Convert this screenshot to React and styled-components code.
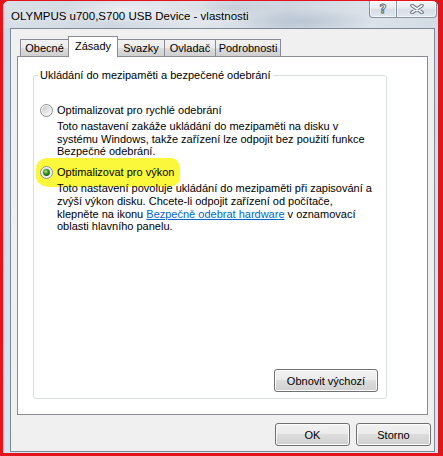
import React, { useId } from 'react';
import styled, { createGlobalStyle } from 'styled-components';

const Global = createGlobalStyle`
  html, body { margin: 0; padding: 0; }
  body {
    width: 443px; height: 456px; overflow: hidden;
    background: #e3141b;
    font-family: "Liberation Sans", Arial, sans-serif;
  }
`;

const Screen = styled.div`
  width: 443px;
  height: 456px;
  box-sizing: border-box;
  padding: 1px 5px 3px 3px;
  background: #e3141b;
  display: flex;
`;

const Window = styled.div`
  flex: 1;
  display: flex;
  flex-direction: column;
  border-radius: 6px 6px 0 0;
  overflow: hidden;
  background: linear-gradient(180deg, #d9e1ea 0px, #d3dce6 27px, #cddbea 28px, #d8e4f0 100%);
`;

const TitleBar = styled.div`
  height: 27px;
  flex: none;
  display: flex;
  align-items: flex-start;
  padding-left: 8px;
  background:
    radial-gradient(ellipse 60px 14px at 120px 8px, rgba(255,255,255,0.55), rgba(255,255,255,0)),
    radial-gradient(ellipse 70px 12px at 300px 20px, rgba(160,175,195,0.45), rgba(160,175,195,0)),
    radial-gradient(ellipse 50px 10px at 230px 6px, rgba(170,180,195,0.4), rgba(170,180,195,0)),
    linear-gradient(90deg, #d8dfe7 0%, #cfd8e1 25%, #e1e6ec 45%, #cdd6e0 65%, #dce2e9 85%, #d3dbe4 100%);
`;

const Title = styled.div`
  padding-top: 8px;
  font-size: 11.5px;
  line-height: 14px;
  color: #000;
  white-space: nowrap;
  text-shadow: 0 0 6px rgba(255,255,255,0.9);
`;

const Captions = styled.div`
  margin-left: auto;
  margin-right: 1px;
  display: flex;
`;

const CaptionButton = styled.div`
  width: ${p => p.$w}px;
  height: 17px;
  box-sizing: border-box;
  border: 1px solid rgba(70, 84, 104, 0.6);
  border-top: none;
  border-left-width: ${p => (p.$first ? 1 : 0)}px;
  border-radius: ${p => (p.$first ? '0 0 0 4px' : '0 0 4px 0')};
  background: linear-gradient(180deg, #f3f5f8 0%, #e7ebf0 45%, #d6dde6 55%, #e2e8ef 100%);
  box-shadow: inset 0 0 0 1px rgba(255,255,255,0.6);
  display: flex;
  align-items: center;
  justify-content: center;
`;

const HelpGlyph = styled.span`
  font-family: "DejaVu Sans", sans-serif;
  font-weight: bold;
  font-size: 12px;
  line-height: 12px;
  color: #f2f4f7;
  -webkit-text-stroke: 0.8px #56606c;
  margin-top: -1px;
`;

const Client = styled.div`
  flex: 1;
  margin: 0 3px 1px 7px;
  border: 1px solid #7d8896;
  background: #f0f0f0;
  padding: 7px 6px 5px 6px;
  display: flex;
  flex-direction: column;
  font-size: 11px;
  color: #000;
`;

const TabStrip = styled.div`
  display: flex;
  align-items: flex-end;
  height: 21px;
  margin: 0 0 -1px 3px;
  position: relative;
  z-index: 1;
`;

const Tab = styled.div`
  width: ${p => p.$w}px;
  height: ${p => (p.$active ? 21 : 18)}px;
  box-sizing: border-box;
  margin-left: ${p => (p.$first ? 0 : -1)}px;
  border: 1px solid #898c95;
  border-bottom: ${p => (p.$active ? 'none' : '1px solid #898c95')};
  background: ${p =>
    p.$active
      ? '#ffffff'
      : 'linear-gradient(180deg, #f2f2f2 0%, #ebebeb 50%, #dddddd 51%, #cfcfcf 100%)'};
  position: relative;
  z-index: ${p => (p.$active ? 2 : 1)};
  display: flex;
  align-items: center;
  justify-content: center;
  padding-bottom: ${p => (p.$active ? 2 : 0)}px;
  font-size: 11px;
  white-space: nowrap;
`;

const Panel = styled.div`
  flex: 1;
  background: #fff;
  border: 1px solid #898c95;
  padding: 12px 40px 15px 15px;
  display: flex;
  flex-direction: column;
`;

const Group = styled.fieldset`
  flex: 1;
  margin: 0;
  min-width: 0;
  border: 1px solid #d5dfe5;
  border-radius: 3px;
  padding: 22px 8px 6px 6px;
  display: flex;
  flex-direction: column;
`;

const GroupTitle = styled.legend`
  padding: 0 2px;
  margin-left: -2px;
  font-size: 11px;
  line-height: 13px;
  white-space: nowrap;
`;

const OptionRow = styled.div`
  display: flex;
  align-items: center;
  gap: 4px;
  height: 13px;
  line-height: 13px;
  margin-top: ${p => p.$top}px;
  align-self: flex-start;
  white-space: nowrap;
  ${p =>
    p.$marked &&
    `
    background: #fbf73a;
    padding: 8px 6px 8px 4px;
    margin-left: -4px;
    margin-right: -6px;
    margin-bottom: -8px;
    margin-top: ${p.$top - 8}px;
    border-radius: 11px 9px 12px 13px / 10px 11px 9px 10px;
  `}
`;

const Description = styled.div`
  margin: 3px 0 0 17px;
  line-height: 12.7px;
`;

const Line = styled.div`
  white-space: nowrap;
`;

const Link = styled.span`
  color: #0066cc;
  text-decoration: underline;
`;

const Button = styled.div`
  width: ${p => p.$w}px;
  height: 23px;
  box-sizing: border-box;
  border: 1px solid #707070;
  border-radius: 3px;
  background: linear-gradient(180deg, #f2f2f2 0%, #ebebeb 48%, #dddddd 50%, #cfcfcf 100%);
  box-shadow: inset 0 0 0 1px #fcfcfc;
  display: flex;
  align-items: center;
  justify-content: center;
  font-size: 11px;
  white-space: nowrap;
  flex: none;
`;

const ResetButton = styled(Button)`
  margin-top: auto;
  align-self: flex-end;
`;

const ButtonRow = styled.div`
  display: flex;
  justify-content: flex-end;
  gap: 6px;
  margin: 8px -3px 0 0;
`;

function Radio({ checked }) {
  const id = useId().replace(/:/g, '');
  return (
    <svg width="13" height="13" viewBox="0 0 13 13" style={{ flex: 'none' }}>
      <defs>
        <linearGradient id={`b${id}`} x1="0" y1="0" x2="1" y2="1">
          <stop offset="0" stopColor="#c9c9c9" />
          <stop offset="1" stopColor="#fafafa" />
        </linearGradient>
        <radialGradient id={`g${id}`} cx="0.4" cy="0.35" r="0.7">
          <stop offset="0" stopColor="#b6f08a" />
          <stop offset="0.45" stopColor="#3c9c27" />
          <stop offset="1" stopColor="#12550e" />
        </radialGradient>
      </defs>
      <circle cx="6.5" cy="6.5" r="6" fill="#f5f5f5" stroke="#8e8f8f" />
      <circle cx="6.5" cy="6.5" r="4.4" fill={`url(#b${id})`} />
      {checked && <circle cx="6.5" cy="6.5" r="3.4" fill={`url(#g${id})`} />}
    </svg>
  );
}

function CloseGlyph() {
  const d = 'M3 1.5 L13 8.5 M13 1.5 L3 8.5';
  return (
    <svg width="16" height="10" viewBox="0 0 16 10">
      <path d={d} stroke="#5b6571" strokeWidth="3.4" strokeLinecap="round" fill="none" />
      <path d={d} stroke="#f3f5f8" strokeWidth="1.7" strokeLinecap="round" fill="none" />
    </svg>
  );
}

const tabs = [
  { label: 'Obecné', w: 49 },
  { label: 'Zásady', w: 50, active: true },
  { label: 'Svazky', w: 48 },
  { label: 'Ovladač', w: 52 },
  { label: 'Podrobnosti', w: 66 },
];

export default function App() {
  return (
    <>
      <Global />
      <Screen>
        <Window>
          <TitleBar>
            <Title>OLYMPUS u700,S700 USB Device - vlastnosti</Title>
            <Captions>
              <CaptionButton $w={28} $first>
                <HelpGlyph>?</HelpGlyph>
              </CaptionButton>
              <CaptionButton $w={40}>
                <CloseGlyph />
              </CaptionButton>
            </Captions>
          </TitleBar>
          <Client>
            <TabStrip>
              {tabs.map((t, i) => (
                <Tab key={t.label} $w={t.w} $active={t.active} $first={i === 0}>
                  {t.label}
                </Tab>
              ))}
            </TabStrip>
            <Panel>
              <Group>
                <GroupTitle>Ukládání do mezipaměti a bezpečené odebrání</GroupTitle>
                <OptionRow $top={0}>
                  <Radio />
                  <span>Optimalizovat pro rychlé odebrání</span>
                </OptionRow>
                <Description>
                  <Line>Toto nastavení zakáže ukládání do mezipaměti na disku v</Line>
                  <Line>systému Windows, takže zařízení lze odpojit bez použití funkce</Line>
                  <Line>Bezpečné odebrání.</Line>
                </Description>
                <OptionRow $top={8} $marked>
                  <Radio checked />
                  <span>Optimalizovat pro výkon</span>
                </OptionRow>
                <Description>
                  <Line>Toto nastavení povoluje ukládání do mezipaměti při zapisování a</Line>
                  <Line>zvýší výkon disku. Chcete-li odpojit zařízení od počítače,</Line>
                  <Line>
                    klepněte na ikonu <Link>Bezpečně odebrat hardware</Link> v oznamovací
                  </Line>
                  <Line>oblasti hlavního panelu.</Line>
                </Description>
                <ResetButton $w={104}>Obnovit výchozí</ResetButton>
              </Group>
            </Panel>
            <ButtonRow>
              <Button $w={75}>OK</Button>
              <Button $w={75}>Storno</Button>
            </ButtonRow>
          </Client>
        </Window>
      </Screen>
    </>
  );
}
